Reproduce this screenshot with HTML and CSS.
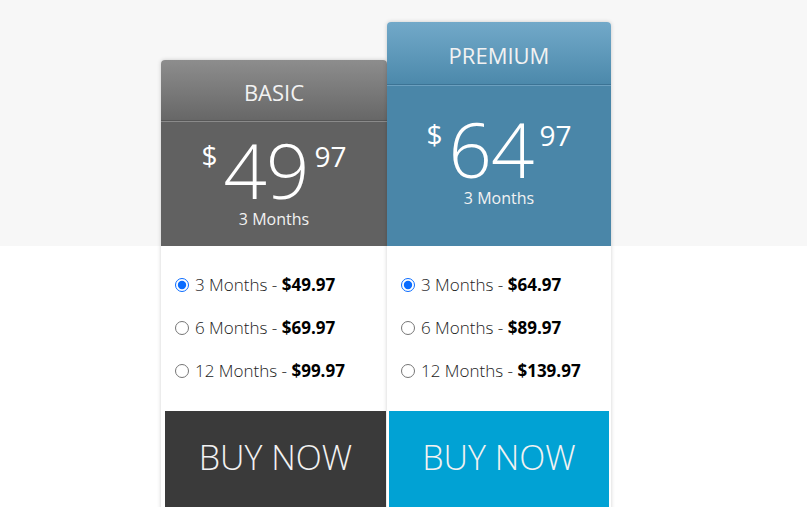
FILE: index.html
```html
<!DOCTYPE html>
<html lang="en">
<head>
<meta charset="utf-8">
<title>Pricing</title>
<link rel="stylesheet" href="styles.css">
</head>
<body>
<div class="pricing">
  <div class="plan plan-basic">
    <div class="plan-head"><h2 class="plan-name">BASIC</h2></div>
    <div class="plan-price">
      <div class="amount"><span class="cur">$</span><span class="int">49</span><span class="cents">97</span></div>
      <div class="term">3 Months</div>
    </div>
    <div class="plan-body">
      <ul class="options">
        <li><label><input type="radio" name="basic" checked><span>3 Months - <b>$49.97</b></span></label></li>
        <li><label><input type="radio" name="basic"><span>6 Months - <b>$69.97</b></span></label></li>
        <li><label><input type="radio" name="basic"><span>12 Months - <b>$99.97</b></span></label></li>
      </ul>
      <a class="buy" href="#">BUY NOW</a>
    </div>
  </div>
  <div class="plan plan-premium">
    <div class="plan-head"><h2 class="plan-name">PREMIUM</h2></div>
    <div class="plan-price">
      <div class="amount"><span class="cur">$</span><span class="int">64</span><span class="cents">97</span></div>
      <div class="term">3 Months</div>
    </div>
    <div class="plan-body">
      <ul class="options">
        <li><label><input type="radio" name="premium" checked><span>3 Months - <b>$64.97</b></span></label></li>
        <li><label><input type="radio" name="premium"><span>6 Months - <b>$89.97</b></span></label></li>
        <li><label><input type="radio" name="premium"><span>12 Months - <b>$139.97</b></span></label></li>
      </ul>
      <a class="buy" href="#">BUY NOW</a>
    </div>
  </div>
</div>
</body>
</html>
```

FILE: styles.css
```css
* { box-sizing: border-box; }
html, body { margin: 0; padding: 0; }
body {
  height: 507px;
  overflow: hidden;
  font-family: "Open Sans", "Liberation Sans", sans-serif;
  background: linear-gradient(#f7f7f7 0, #f7f7f7 246px, #ffffff 246px);
}
.pricing {
  display: flex;
  align-items: flex-start;
  padding-left: 161px;
}
.plan {
  position: relative;
  background: #fff;
  box-shadow: 0 0 4px rgba(0,0,0,0.18);
  border-radius: 4px 4px 0 0;
}
.plan-basic { width: 226px; margin-top: 60px; z-index: 1; }
.plan-premium { width: 224px; margin-top: 22px; z-index: 2; }

.plan-head {
  border-radius: 4px 4px 0 0;
  display: flex;
  align-items: center;
  justify-content: center;
}
.plan-basic .plan-head {
  background: linear-gradient(#8d8d8d, #676767);
  border-bottom: 1px solid #575757;
  box-shadow: 0 1px 0 #8a8a8a;
  height: 61px;
  margin-bottom: 1px;
}
.plan-premium .plan-head {
  background: linear-gradient(#72a9c9, #4c89ab);
  border-bottom: 1px solid #3c7394;
  box-shadow: 0 1px 0 #6ca0bf;
  height: 63px;
  margin-bottom: 1px;
}
.plan-name {
  margin: 0;
  font-size: 22px;
  font-weight: 400;
  color: #f2f2f2;
  line-height: 28px;
  padding-top: 3px;
}
.plan-price { color: #fff; text-align: center; }
.plan-basic .plan-price { background: #616161; height: 124px; padding-top: 15px; }
.plan-premium .plan-price { background: #4a86a8; height: 160px; padding-top: 30px; }

.amount {
  display: flex;
  justify-content: center;
  align-items: flex-start;
  height: 66px;
}
.cur { font-size: 28px; line-height: 28px; margin-top: 4px; margin-right: 6px; }
.int { font-size: 76px; line-height: 66px; font-weight: 300; letter-spacing: -1px; }
.cents { font-size: 28px; line-height: 28px; margin-top: 5px; margin-left: 6px; font-weight: 400; }
.term { font-size: 16px; line-height: 20px; margin-top: 6px; font-weight: 500; color: #f2f2f2; }

.plan-basic .plan-body { padding: 0 1px 0 4px; }
.plan-premium .plan-body { padding: 0 2px; }
.options {
  list-style: none;
  margin: 0;
  padding: 17px 0 19px 10px;
}
.plan-premium .options { padding-left: 12px; }
.options li { height: 43px; line-height: 43px; }
.options label {
  display: flex;
  align-items: center;
  font-size: 17px;
  font-weight: 300;
  color: #222;
}
.options input {
  width: 14px;
  height: 14px;
  margin: 0 6px 0 0;
  accent-color: #0a6cff;
}
.options b { font-weight: 700; color: #000; }

.buy {
  display: block;
  height: 100px;
  line-height: 93px;
  text-align: center;
  font-size: 34px;
  font-weight: 300;
  color: #f2f2f2;
  text-decoration: none;
}
.plan-basic .buy { background: #3a3a3a; }
.plan-premium .buy { background: #01a2d4; }
```
